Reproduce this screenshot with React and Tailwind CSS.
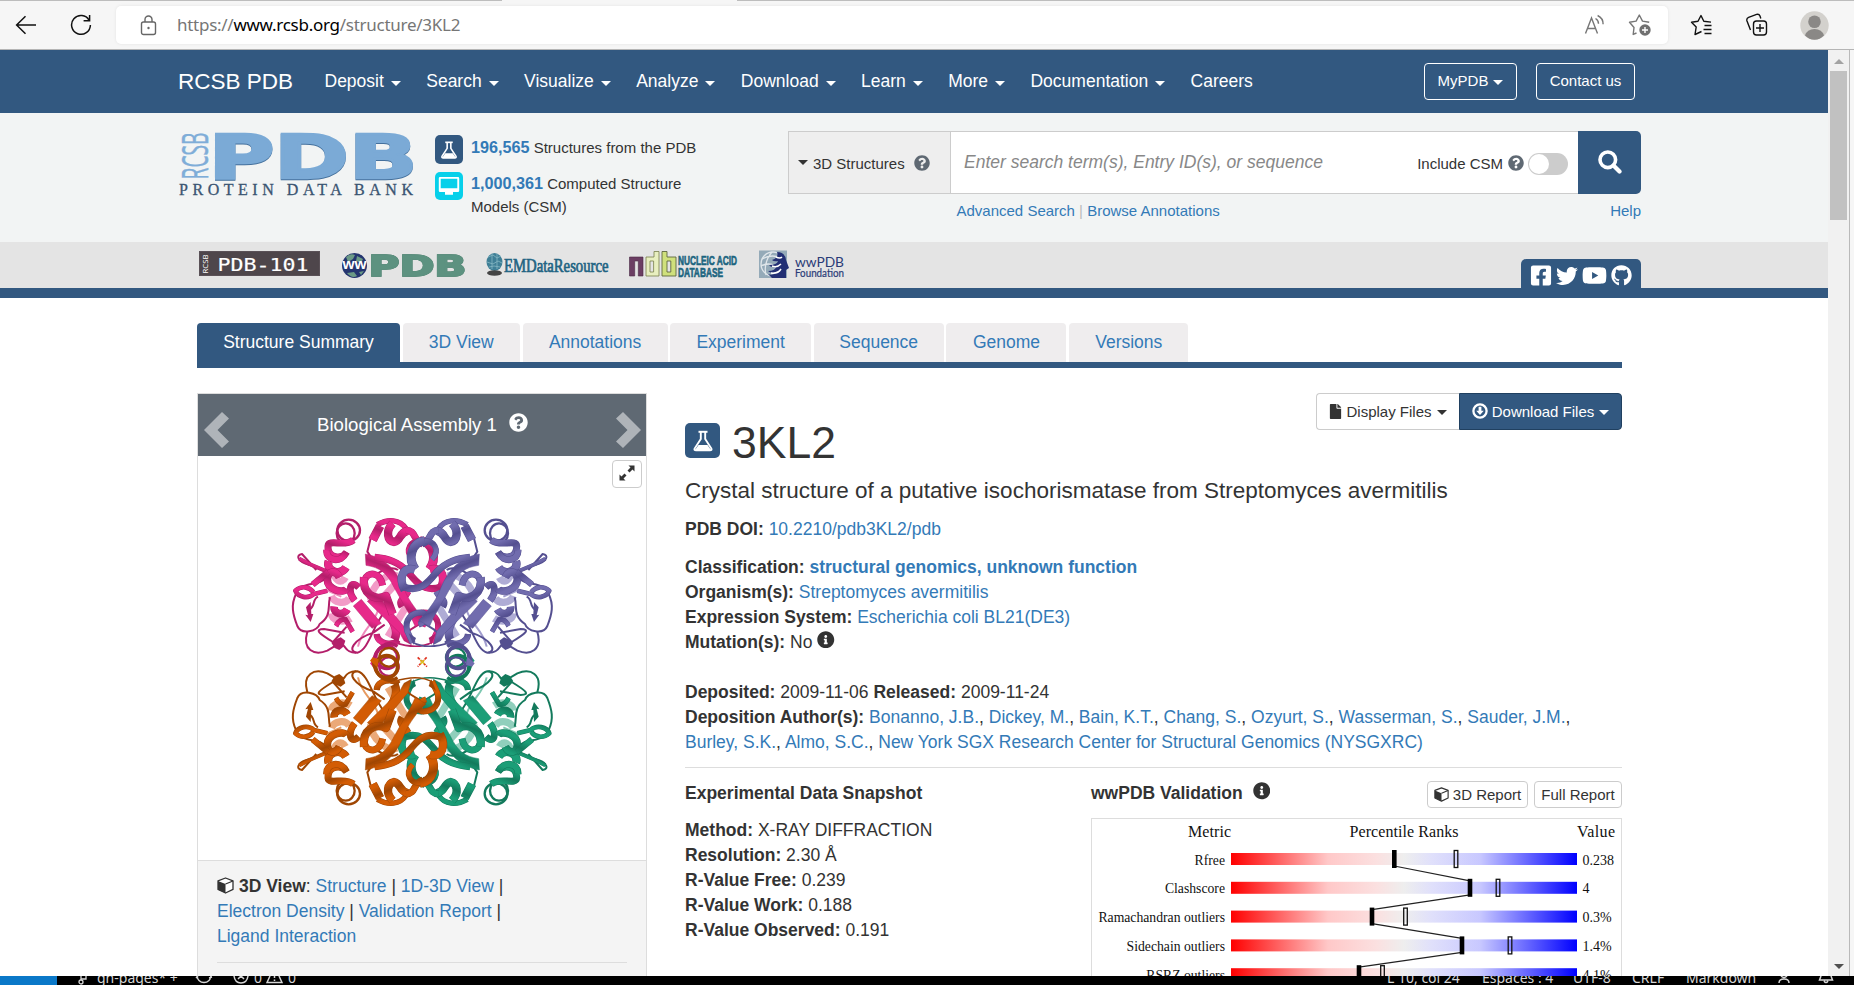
import React from "react";
import { FaFacebookSquare, FaTwitter, FaYoutube, FaGithub, FaQuestionCircle, FaInfoCircle, FaFile } from "react-icons/fa";

const Caret = ({ className = "" }) => (
  <span className={"inline-block h-0 w-0 border-x-[5px] border-t-[5px] border-x-transparent border-t-current " + className} />
);

const A = ({ children, className = "" }) => <a className={"text-[#337ab7] " + className}>{children}</a>;

const Flask = ({ className }) => (
  <svg viewBox="0 0 24 24" className={className} fill="none" stroke="#fff">
    <path d="M7.5 2.8h9" strokeWidth="2" />
    <path d="M9.8 3v7L3.6 19.6Q2.9 21.4 5 21.4h14q2.1 0 1.4-1.8L14.2 10V3" strokeWidth="1.9" />
    <path d="M7.500 16h9l3.500 5h-16z" fill="#fff" stroke="none" />
  </svg>
);

const Cube = ({ className }) => (
  <svg viewBox="0 0 17 17" className={className}>
    <path d="M8.5 1 16 3.8v8.6L8.5 16 1 12.4V3.8z" fill="#fff" stroke="#333" strokeWidth="1.3" strokeLinejoin="round" />
    <path d="M1 4l7.5 3V16L1 12.4z" fill="#333" />
    <path d="M8.5 7 16 4" stroke="#333" strokeWidth="1.2" />
  </svg>
);

/* ---------- browser chrome ---------- */
function Toolbar() {
  return (
    <div className="flex h-[50px] shrink-0 flex-col border-b border-[#b5b5b5] bg-[#f6f6f6]">
      <div className="flex h-[1px] shrink-0">
        <div className="w-[502px] bg-[#bdbdbd]" />
        <div className="w-[235px]" />
        <div className="grow bg-[#bdbdbd]" />
      </div>
      <div className="flex h-[48px] items-center">
        <svg className="ml-[15px] h-[22px] w-[22px]" viewBox="0 0 22 22" fill="none" stroke="#111" strokeWidth="1.5">
          <path d="M21 11H2M10.5 2.2 1.6 11l8.9 8.8" />
        </svg>
        <svg className="ml-[33px] h-[22px] w-[22px]" viewBox="0 0 22 22" fill="none" stroke="#111" strokeWidth="1.5">
          <path d="M19.2 6.3A9.4 9.4 0 1 0 20.4 11" />
          <path d="M19.6 1v5.8h-6" />
        </svg>
        <div className="ml-[24px] flex h-[38px] w-[1552px] items-center rounded-[5px] bg-white shadow-[0_0_3px_#e2e2e2]">
          <svg className="ml-[24px] h-[21px] w-[17px]" viewBox="0 0 17 21" fill="none" stroke="#666" strokeWidth="1.4">
            <rect x="1.5" y="7" width="14" height="12.5" rx="2" />
            <path d="M5 7V4.500a3.500 3.500 0 0 1 7 0V7" />
            <circle cx="8.500" cy="13" r="1.200" fill="#666" stroke="none" />
          </svg>
          <div className="ml-[20px] w-[300px] whitespace-nowrap font-['Noto_Sans',sans-serif] text-[17px] tracking-[-0.27px] text-[#767676]">
            https://<span className="text-black">www.rcsb.org</span>/structure/3KL2
          </div>
          <div className="grow" />
          <svg className="h-[22px] w-[21px]" viewBox="0 0 21 22" fill="none" stroke="#767676" strokeWidth="1.4">
            <path d="M1.500 19.500 7.500 4l6 15.500M3.800 14.500h7.500" />
            <path d="M11.500 4.500a6 6 0 0 1 3 5.300M13.600 1.500a9.500 9.500 0 0 1 5.500 8.800" />
          </svg>
          <svg className="ml-[23px] mr-[16px] h-[24px] w-[24px]" viewBox="0 0 24 24" fill="none" stroke="#767676" strokeWidth="1.4">
            <path d="M8.5 20 5.2 21.4 6 14.5 1.5 9.3l6.6-1.2L11.3 2l3.2 6.1 6.7 1.2" strokeLinejoin="round" />
            <circle cx="17" cy="17" r="5.7" fill="#707070" stroke="none" />
            <path d="M17 14v6M14 17h6" stroke="#fff" />
          </svg>
        </div>
        <svg className="ml-[22px] h-[22px] w-[23px]" viewBox="0 0 23 22" fill="none" stroke="#111" strokeWidth="1.4">
          <path d="M11.500 17.500 5 20.500l1.200-7.500L1.500 8.300 8 7.300 11 1.500l2.800 5.800 7.200.8" strokeLinejoin="round" />
          <path d="M14.500 11.500h7M13.500 15.500h8M14.500 19.500h7" />
        </svg>
        <svg className="ml-[32px] h-[24px] w-[23px]" viewBox="0 0 23 24" fill="none" stroke="#111" strokeWidth="1.4">
          <rect x="8.5" y="8" width="13" height="14" rx="3" />
          <path d="M15 11v8M11 15h8" />
          <path d="M5.5 17 2 8q-.8-2.6 1.6-3.6l8-3q2.4-.7 3.4 1.6l.8 2.5" />
        </svg>
        <svg className="ml-[32px] h-[29px] w-[29px]" viewBox="0 0 29 29">
          <circle cx="14.500" cy="14.500" r="14.200" fill="#d3d1cd" />
          <circle cx="14.500" cy="10.800" r="6.300" fill="#8a8886" />
          <path d="M5 24.500q2-6.500 9.500-6.500t9.500 6.500q-4 4.200-9.500 4.200T5 24.500z" fill="#8a8886" />
        </svg>
      </div>
    </div>
  );
}

/* ---------- navigation ---------- */
const NAV = ["Deposit", "Search", "Visualize", "Analyze", "Download", "Learn", "More", "Documentation"];

function NavBar() {
  return (
    <nav className="flex h-[63px] shrink-0 items-center bg-[#325880] pl-[178px] text-white">
      <span className="w-[146.5px] whitespace-nowrap text-[22.5px]">RCSB PDB</span>
      {NAV.map((n) => (
        <span key={n} className="mr-[25.4px] flex items-center whitespace-nowrap text-[17.5px]">
          {n}
          <Caret className="ml-[7px] mt-[4px]" />
        </span>
      ))}
      <span className="text-[17.5px]">Careers</span>
      <span className="grow" />
      <span className="mr-[19px] flex h-[37px] w-[93px] items-center justify-center rounded-[4px] border border-white text-[15px]">
        MyPDB
        <Caret className="ml-[5px] mt-[2px]" />
      </span>
      <span className="mr-[193px] flex h-[37px] w-[99px] items-center justify-center rounded-[4px] border border-white text-[15px]">Contact us</span>
    </nav>
  );
}

/* ---------- header ---------- */
function PdbLogo() {
  return (
    <svg width="240" height="70" viewBox="176 130 240 70" className="shrink-0 overflow-visible">
      <text transform="translate(207.5 179.5) rotate(-90)" textLength="47" lengthAdjust="spacingAndGlyphs" fontFamily="'Open Sans',sans-serif" fontSize="36.500" fill="#7fadd8" stroke="#7fadd8" strokeWidth=".5">RCSB</text>
      <text x="208.500" y="178.300" textLength="209" lengthAdjust="spacingAndGlyphs" fontFamily="'DejaVu Sans',sans-serif" fontWeight="bold" fontSize="61" fill="#7baad6" stroke="#7baad6" strokeWidth="2.400" className="drop-shadow-[0.8px_1px_0px_#44709c]">PDB</text>
      <text x="179" y="195" textLength="234" lengthAdjust="spacing" fontFamily="'Liberation Serif',serif" fontSize="16" fill="#3b5572" stroke="#3b5572" strokeWidth=".3">PROTEIN DATA BANK</text>
    </svg>
  );
}

function Header() {
  return (
    <header className="flex h-[129px] shrink-0 bg-[#f2f4f4] pl-[176px] text-[15px] text-[#333]">
      <div className="pt-[17px]"><PdbLogo /></div>
      <div className="ml-[19px] flex w-[353px] flex-col pt-[22px]">
        <div className="flex h-[37px]">
          <span className="flex h-[29px] w-[28px] items-center justify-center rounded-[5px] bg-[#325880]">
            <Flask className="h-[20px] w-[20px]" />
          </span>
          <span className="ml-[8px] leading-[24px]"><b className="text-[16.2px] text-[#337ab7]">196,565</b> Structures from the PDB</span>
        </div>
        <div className="flex">
          <span className="flex h-[28px] w-[28px] items-center justify-center rounded-[5px] bg-[#07d0ea]">
            <svg viewBox="0 0 22 20" className="h-[20px] w-[22px]">
              <path fillRule="evenodd" fill="#fff" d="M2 1h18q1.200 0 1.200 1.200v12.600q0 1.200-1.200 1.200h-5v2.800H7V16H2Q.8 16 .8 14.800V2.200Q.8 1 2 1zM2.700 2.700v9.600h16.600V2.700z" />
            </svg>
          </span>
          <span className="ml-[8px] w-[240px] leading-[22.5px]"><b className="text-[16.2px] text-[#337ab7]">1,000,361</b> Computed Structure Models (CSM)</span>
        </div>
      </div>
      <div className="w-[853px] pt-[18px]">
        <div className="flex h-[63px]">
          <div className="flex w-[163px] items-center border border-[#ccc] bg-[#eee] pl-[9px] pt-[1px]">
            <Caret className="mr-[5px] -mt-[1px]" />
            <span className="pt-[2px]">3D Structures</span>
            <FaQuestionCircle className="ml-[9px] h-[16px] w-[16px] text-[#5f6973]" />
          </div>
          <div className="flex grow items-center border-y border-[#ccc] bg-white">
            <span className="ml-[13px] -mt-[1px] whitespace-nowrap text-[17.5px] italic text-[#888]">Enter search term(s), Entry ID(s), or sequence</span>
            <span className="grow" />
            <span className="whitespace-nowrap pt-[4px]">Include CSM</span>
            <FaQuestionCircle className="ml-[5px] mt-[1px] h-[16px] w-[16px] text-[#5f6973]" />
            <span className="ml-[4px] mr-[10px] mt-[2px] flex h-[22px] w-[40px] items-center rounded-full bg-[#ccc] pl-[1px]">
              <span className="h-[20px] w-[20px] rounded-full bg-white" />
            </span>
          </div>
          <div className="flex w-[63px] items-center justify-center rounded-r-[5px] bg-[#325880]">
            <svg viewBox="0 0 24 24" className="-mt-[1px] h-[24px] w-[24px]" fill="none" stroke="#fff">
              <circle cx="9.800" cy="9.800" r="7.800" strokeWidth="3.600" />
              <path d="M15.500 15.500l6 6" strokeWidth="4.200" strokeLinecap="round" />
            </svg>
          </div>
        </div>
        <div className="flex justify-between pl-[168.5px] pt-[6px] leading-[22px]">
          <span className="text-[#bbb]"><A>Advanced Search</A> | <A>Browse Annotations</A></span>
          <A>Help</A>
        </div>
      </div>
    </header>
  );
}

/* ---------- partner strip ---------- */
function PartnerLogos() {
  return (
    <svg width="660" height="40" viewBox="195 245 660 40" className="overflow-visible">
      <rect x="199" y="251" width="121" height="25" fill="#5a5157" />
      <rect x="200" y="252" width="119" height="23" fill="#4e464b" />
      <text transform="translate(208 273.500) rotate(-90)" textLength="19" lengthAdjust="spacingAndGlyphs" fontFamily="'Open Sans',sans-serif" fontSize="7.500" fill="#fff">RCSB</text>
      <text x="217.500" y="270.500" textLength="91" lengthAdjust="spacingAndGlyphs" fontFamily="'DejaVu Sans Mono',monospace" fontSize="17.500" fill="#fff" stroke="#fff" strokeWidth=".15">PDB-101</text>

      <circle cx="354.500" cy="265.500" r="12.500" fill="#24356f" />
      <path d="M346 257q4-4 9-2l-2 4-5 3zM357 256l6 3-2 4-5-2zM347 273l7-1 3 4q-5 3-10-3zM359 272l5-1-3 4z" fill="#6b9a86" />
      <text x="342.500" y="269" textLength="24" lengthAdjust="spacingAndGlyphs" fontFamily="'Liberation Sans',sans-serif" fontWeight="bold" fontSize="14" fill="#fff">ww</text>
      <text x="368.500" y="276" textLength="98" lengthAdjust="spacingAndGlyphs" fontFamily="'DejaVu Sans',sans-serif" fontWeight="bold" fontSize="28" fill="#5d9280" stroke="#5d9280" strokeWidth="1.600" className="drop-shadow-[0.5px_0.7px_0px_#3b6a58]">PDB</text>

      <ellipse cx="494.500" cy="262" rx="8" ry="9" fill="#3f7f96" />
      <path d="M488 257l5-2 4 3 4-2M487 262l6 2 5-3 4 2M489 267l5-1 6 1M492 254v15M497 254v15" stroke="#86b7c4" strokeWidth=".8" fill="none" />
      <ellipse cx="494.500" cy="273" rx="7.500" ry="2.800" fill="#444" />
      <text x="504" y="271.500" textLength="104.500" lengthAdjust="spacingAndGlyphs" fontFamily="'Liberation Serif',serif" fontSize="18.500" fill="#1f6483" stroke="#1f6483" strokeWidth=".7">EMDataResource</text>

      <g fontFamily="'Liberation Sans',sans-serif" fontWeight="bold">
        <path d="M629.500 276v-19h13.500v19h-4.700v-15h-3.600v15z" fill="#6b3e63" stroke="#4a2a45" strokeWidth=".6" />
        <path d="M646 276v-19h8v-5.500h5V276z M650 261v11h3.600v-11z" fill="#e8efc0" fillRule="evenodd" stroke="#777f4a" strokeWidth=".8" />
        <path d="M662 251.500h5v5.500h9v19h-14z M667 261v11h3.800v-11z" fill="#cfe07c" fillRule="evenodd" stroke="#5d6740" strokeWidth=".9" />
        <text x="678" y="265" textLength="59" lengthAdjust="spacingAndGlyphs" fontSize="12.500" fill="#1c6580" stroke="#1c6580" strokeWidth=".6">NUCLEIC ACID</text>
        <text x="678" y="276.500" textLength="45" lengthAdjust="spacingAndGlyphs" fontSize="12.500" fill="#1c6580" stroke="#1c6580" strokeWidth=".6">DATABASE</text>
      </g>

      <rect x="759" y="250.500" width="28" height="27.500" fill="#94aab8" />
      <g fill="none" stroke="#dfe6ea" strokeWidth="1.300">
        <circle cx="773" cy="264" r="12" />
        <path d="M762 259q10-6 22 0M761 266q8-4 14 0M766 275q-3-12 6-23" />
      </g>
      <path d="M777 252q8 0 9 8l3 8-3 2v8h-14l-4-4q6 2 8-2-5 2-8-1 7 0 8-4-5 1-7-2 8 0 9-4-4 1-6-1 7-2 5-8z" fill="#222f74" />
      <path d="M776 257q4 2 6 0M772 266q5 2 9-2M771 273q7 1 10-4" stroke="#fff" strokeWidth="1.500" fill="none" />
      <g fontFamily="'Lato',sans-serif" fill="#2a3c78">
        <text x="795" y="266.500" textLength="49" lengthAdjust="spacingAndGlyphs" fontSize="13.500">wwPDB</text>
        <text x="795" y="277" textLength="49" lengthAdjust="spacingAndGlyphs" fontSize="10.500" stroke="#2a3c78" strokeWidth=".2">Foundation</text>
      </g>
    </svg>
  );
}

function PartnerStrip() {
  return (
    <div className="flex h-[56px] shrink-0 justify-between border-b-[10px] border-[#325880] bg-[#e4e4e4] pl-[195px] pr-[187px]">
      <div className="pt-[3px]"><PartnerLogos /></div>
      <div className="mt-[17px] flex h-[29px] w-[120px] items-center gap-[4px] rounded-t-[5px] bg-[#325880] pl-[9px] pt-[4px] text-white">
        <FaFacebookSquare className="h-[23px] w-[22px]" />
        <FaTwitter className="h-[22px] w-[22px]" />
        <FaYoutube className="h-[25px] w-[25px]" />
        <FaGithub className="h-[21px] w-[21px]" />
      </div>
    </div>
  );
}

/* ---------- molecule ---------- */
function Chain({ id, main, dark, light, transform }) {
  const g = `url(#${id})`;
  const R = ({ d, w = 24 }) => (
    <>
      <path d={d} stroke={dark} strokeWidth={w + 1} />
      <path d={d} stroke={g} strokeWidth={w - 2} />
    </>
  );
  return (
    <g transform={transform} fill="none" strokeLinejoin="round">
      <defs>
        <linearGradient id={id} gradientUnits="userSpaceOnUse" x1="0" y1="0" x2="18" y2="44" spreadMethod="reflect">
          <stop offset="0" stopColor={main} />
          <stop offset=".5" stopColor={main} />
          <stop offset="1" stopColor={dark} />
        </linearGradient>
      </defs>
      <g stroke={light} strokeWidth="22">
        <path d="M534 258C560 244 610 285 612 330M600 350L536 280M688 262C700 285 722 270 724 240M676 325C690 345 722 338 730 318M672 385C695 400 728 392 730 370M560 440L500 340" opacity=".85" />
        <path d="M590 360C600 400 640 420 650 470M745 300L700 320" strokeWidth="6" />
      </g>
      <g stroke={dark} strokeWidth="6">
        <path d="M836 312C852 345 846 372 832 408C820 436 772 424 765 402C728 378 742 350 734 322" />
        <path d="M802 425C818 480 782 498 742 482L702 458" />
        <path d="M690 428L752 417C782 418 768 430 725 456L684 410" />
        <path d="M570 365C608 412 618 480 652 488C684 486 664 448 604 428L570 404" />
        <path d="M655 488C690 490 690 460 700 462" />
        <path d="M775 240L818 192C838 194 832 216 796 224" />
        <path d="M612 145L622 185L612 200" />
        <path d="M505 430C480 402 450 408 460 380" />
        <path d="M530 240C550 225 590 245 600 260" />
        <path d="M745 262C770 290 790 270 836 300M770 320C790 330 775 350 800 362" />
        <path d="M425 455C450 470 490 474 540 458" strokeWidth="5" />
      </g>
      <R d="M428 458L412 424C402 390 424 366 458 368C476 374 466 398 446 404" w={17} />
      <R d="M530 450C546 470 592 462 594 432" w={18} />
      <R d="M540 448C528 420 544 396 560 372" w={24} />
      <path d="M640 328L664 348L608 415L580 400Z" fill={g} stroke={dark} strokeWidth="1.500" />
      <R d="M648 292C672 268 684 300 660 332" w={20} />
      <R d="M500 304C512 328 530 330 518 350" w={20} />
      <path d="M594 312L622 334L524 430L512 452L490 464L500 424Z" fill={g} stroke={dark} strokeWidth="1.500" />
      <path d="M628 192L626 226C584 232 562 250 542 292L490 384L478 410L446 390L464 374C486 344 498 330 510 300C530 250 560 205 628 192Z" fill={g} stroke={dark} strokeWidth="1.500" />
      <R d="M576 286C584 244 622 244 630 270" w={20} />
      <R d="M632 262C638 312 600 334 566 318L546 372" w={24} />
      <R d="M606 150L584 108" w={26} />
      <R d="M592 104C560 86 524 88 506 116" w={15} />
      <R d="M546 100C568 122 562 152 542 156C520 152 528 128 500 122" w={24} />
      <R d="M506 120C474 122 488 150 456 162" w={20} />
      <R d="M486 208C512 180 492 148 458 154" w={16} />
      <R d="M464 152C424 158 412 206 436 238" w={26} />
      <R d="M434 238C398 230 384 262 404 300" w={24} />
      <R d="M400 290C450 310 476 276 500 246C530 214 560 206 600 202" w={20} />
      <g stroke={dark} strokeWidth="7">
        <ellipse cx="678" cy="121" rx="34" ry="32" />
        <ellipse cx="687" cy="130" rx="27" ry="30" />
      </g>
      <R d="M664 150C690 172 738 146 740 168C742 206 698 210 684 186" w={20} />
      <R d="M686 188C700 220 746 214 744 180" w={20} />
      <R d="M686 232C704 262 748 240 738 214" w={24} />
      <R d="M684 296C694 312 742 300 742 268C740 240 716 240 706 262" w={22} />
      <R d="M682 358C694 380 724 372 722 350" w={22} />
      <R d="M666 425L688 388C708 386 712 402 716 408" w={14} />
      <R d="M744 244L796 222L826 206" w={11} />
      <R d="M740 246L786 284" w={18} />
      <R d="M742 302L782 312C800 328 830 322 838 302C820 286 796 290 784 306" w={13} />
      <path d="M792 336L806 352L800 376L808 374L792 396L784 372L790 372Z" fill={dark} />
      <path d="M688 452L702 442L716 448L730 458L720 474L706 480L694 470Z" fill={dark} />
      <path d="M416 430L438 444L430 464Z" fill={dark} />
      <g stroke={dark}>
        <ellipse cx="564" cy="502" rx="33" ry="33" strokeWidth="11" />
        <ellipse cx="557" cy="530" rx="29" ry="28" strokeWidth="7" />
        <path d="M532 470C560 446 600 470 606 524" strokeWidth="9" />
      </g>
      <path d="M592 500L614 520L606 530L588 524Z" fill={main} />
    </g>
  );
}

function Molecule() {
  return (
    <svg width="310" height="340" viewBox="0 0 930 1020">
      <Chain id="cm" main="#e7298a" dark="#b31e6a" light="#f08abd" transform="translate(914 0) scale(-1 1)" />
      <Chain id="cg" main="#1b9e77" dark="#137a5c" light="#7cc7b0" transform="translate(0 1032) scale(1 -1)" />
      <Chain id="cp" main="#716cae" dark="#544f90" light="#a19dce" />
      <Chain id="co" main="#d35c04" dark="#9f4603" light="#e79a60" transform="translate(914 1032) scale(-1 -1)" />
      <g strokeWidth="5" fill="none">
        <path d="M443 502L457 516L471 530M470 502L443 530" stroke="#e0301e" strokeDasharray="9 3" />
        <path d="M451 510L463 522M463 510L451 522" stroke="#d8c41e" strokeWidth="4" />
      </g>
    </svg>
  );
}

function AssemblyCard() {
  return (
    <div className="flex h-[583px] w-[450px] shrink-0 flex-col border border-b-0 border-[#ddd]">
      <div className="flex h-[62px] shrink-0 items-center justify-between bg-[#5f6973] pl-[6px] pr-[5px] text-white">
        <svg width="25" height="36" viewBox="0 0 25 36" className="mt-[10px]"><path d="M18 0l7 6.500L13.500 18 25 29.500 18 36 0 18z" fill="#afb4b9" /></svg>
        <span className="flex items-center text-[18.6px] leading-[24px]">
          Biological Assembly 1
          <FaQuestionCircle className="-mt-[5px] ml-[12px] h-[19px] w-[19px]" />
        </span>
        <svg width="25" height="36" viewBox="0 0 25 36" className="mt-[10px]"><path d="M7 0L0 6.500 11.500 18 0 29.500 7 36 25 18z" fill="#afb4b9" /></svg>
      </div>
      <div className="flex h-[405px] shrink-0 flex-col border-b border-[#ddd]">
        <div className="flex h-[34px] justify-end pr-[4px] pt-[4px]">
          <span className="flex h-[28px] w-[30px] items-center justify-center rounded-[4px] border border-[#ccc]">
            <svg viewBox="0 0 16 16" className="-mt-[3px] h-[16px] w-[16px]" fill="#333">
              <path d="M9.500 0.500h6V6.500l-2-2-3 3-2-2 3-3zM6.500 15.500H.5V9.500l2 2 3-3L7.500 10.500l-3 3z" />
            </svg>
          </span>
        </div>
        <div className="pl-[72px]"><Molecule /></div>
      </div>
      <div className="grow bg-[#f4f4f4] px-[19px] pt-[13px] text-[17.5px] leading-[25px] text-[#333]">
        <div className="whitespace-nowrap">
          <Cube className="mr-[5px] inline-block h-[17px] w-[17px] align-[-2px]" />
          <b>3D View</b>: <A>Structure</A> | <A>1D-3D View</A> |
        </div>
        <div><A>Electron Density</A> | <A>Validation Report</A> |</div>
        <div><A>Ligand Interaction</A></div>
        <div className="mt-[13px] border-t border-[#ddd]" />
      </div>
    </div>
  );
}

/* ---------- validation chart ---------- */
const ROWS = [
  ["Rfree", "0.238", 303.3, 365],
  ["Clashscore", "4", 379, 407],
  ["Ramachandran outliers", "0.3%", 281, 314.5],
  ["Sidechain outliers", "1.4%", 371, 419],
  ["RSRZ outliers", "4.1%", 268, 291.5],
];

function ValidationChart() {
  return (
    <svg width="529" height="158" viewBox="1 1 529 158" fontFamily="'Liberation Serif',serif" fill="#111">
      <defs>
        <linearGradient id="rank">
          <stop offset="0" stopColor="#f00" />
          <stop offset=".28" stopColor="#ffc8c8" />
          <stop offset=".42" stopColor="#fbe0e0" />
          <stop offset=".5" stopColor="#eee" />
          <stop offset=".58" stopColor="#e0e0fb" />
          <stop offset=".72" stopColor="#c8c8ff" />
          <stop offset="1" stopColor="#00f" />
        </linearGradient>
      </defs>
      <text x="97" y="19" textLength="43" fontSize="16">Metric</text>
      <text x="258.500" y="19" textLength="109" fontSize="16">Percentile Ranks</text>
      <text x="486" y="19" textLength="38" fontSize="16">Value</text>
      {ROWS.map(([name, value, a, b], i) => {
        const y = 41 + i * 28.8;
        const next = ROWS[i + 1];
        return (
          <g key={name}>
            <text x="134" y={y + 5.5} textAnchor="end" fontSize="13.700">{name}</text>
            <rect x="140" y={y - 6} width="346" height="12" fill="url(#rank)" />
            <text x="491.500" y={y + 5.5} fontSize="14">{value}</text>
            {next && <path d={`M${a} ${y + 7}L${next[2]} ${y + 21.8}`} stroke="#222" strokeWidth="1.2" />}
            <rect x={a - 2.3} y={y - 9} width="4.600" height="18" fill="#000" />
            <rect x={b - 1.8} y={y - 8.5} width="3.600" height="17" fill="none" stroke="#111" strokeWidth="1.300" />
          </g>
        );
      })}
    </svg>
  );
}

/* ---------- right column ---------- */
const AUTHORS = ["Bonanno, J.B.", "Dickey, M.", "Bain, K.T.", "Chang, S.", "Ozyurt, S.", "Wasserman, S.", "Sauder, J.M."];
const AUTHORS2 = ["Burley, S.K.", "Almo, S.C."];

function Details() {
  return (
    <div className="flex w-[937px] flex-col text-[17.5px] leading-[25px] text-[#333]">
      <div className="flex h-[65px] justify-between">
        <div className="flex items-end">
          <span className="flex h-[35px] w-[35px] items-center justify-center rounded-[5px] bg-[#325880]">
            <Flask className="h-[24px] w-[24px]" />
          </span>
          <span className="ml-[12px] text-[44.5px] leading-[31px]">3KL2</span>
        </div>
        <div className="flex h-[37px] text-[15px] leading-[22px]">
          <span className="flex w-[143px] items-center justify-center rounded-l-[4px] border border-r-0 border-[#ccc]">
            <FaFile className="mr-[4px] h-[15px] w-[13px]" />
            Display Files
            <Caret className="ml-[5px] mt-[2px]" />
          </span>
          <span className="flex w-[163px] items-center justify-center rounded-r-[4px] border border-[#204060] bg-[#325880] text-white">
            <svg viewBox="0 0 16 16" className="-mt-[2px] mr-[4px] h-[16px] w-[16px]">
              <circle cx="8" cy="8" r="6.600" fill="none" stroke="#fff" strokeWidth="2.300" />
              <path d="M6.600 3.800h2.800v4h2.400L8 12 4.200 7.800h2.400z" fill="#fff" />
            </svg>
            Download Files
            <Caret className="ml-[5px] mt-[2px]" />
          </span>
        </div>
      </div>
      <div className="mt-[20px] text-[22.5px] leading-[26px]">Crystal structure of a putative isochorismatase from Streptomyces avermitilis</div>
      <div className="mt-[13px]"><b>PDB DOI:</b> <A>10.2210/pdb3KL2/pdb</A></div>
      <div className="mt-[13px]"><b>Classification:</b> <A className="font-bold">structural genomics, unknown function</A></div>
      <div><b>Organism(s):</b> <A>Streptomyces avermitilis</A></div>
      <div><b>Expression System:</b> <A>Escherichia coli BL21(DE3)</A></div>
      <div><b>Mutation(s):</b> No <FaInfoCircle className="inline-block h-[17.5px] w-[17.5px] align-[0px]" /></div>
      <div className="mt-[25px]"><b>Deposited:</b> 2009-11-06 <b>Released:</b> 2009-11-24</div>
      <div className="whitespace-nowrap"><b>Deposition Author(s):</b> {AUTHORS.map((a) => <React.Fragment key={a}><A>{a}</A>, </React.Fragment>)}</div>
      <div className="whitespace-nowrap">{AUTHORS2.map((a) => <React.Fragment key={a}><A>{a}</A>, </React.Fragment>)}<A>New York SGX Research Center for Structural Genomics (NYSGXRC)</A></div>
      <div className="mt-[12px] border-t border-[#ddd]" />
      <div className="mt-[13px] flex justify-between">
        <div>
          <b>Experimental Data Snapshot</b>
          <div className="mt-[12px]"><b>Method:</b> X-RAY DIFFRACTION</div>
          <div><b>Resolution:</b> 2.30 Å</div>
          <div><b>R-Value Free:</b> 0.239</div>
          <div><b>R-Value Work:</b> 0.188</div>
          <div><b>R-Value Observed:</b> 0.191</div>
        </div>
        <div className="w-[531px]">
          <div className="flex h-[37px] text-[15px]">
            <b className="text-[17.5px]">wwPDB Validation</b>
            <FaInfoCircle className="ml-[10px] mt-[1px] h-[17.5px] w-[17.5px]" />
            <span className="grow" />
            <span className="mr-[6px] flex h-[27px] w-[101px] items-center justify-center rounded-[4px] border border-[#ccc] leading-[24px]">
              <Cube className="mr-[4px] h-[15px] w-[15px]" />
              3D Report
            </span>
            <span className="flex h-[27px] w-[88px] items-center justify-center rounded-[4px] border border-[#ccc] leading-[24px]">Full Report</span>
          </div>
          <div className="h-[160px] border border-b-0 border-[#ddd]"><ValidationChart /></div>
        </div>
      </div>
    </div>
  );
}

const TABS = [
  ["3D View", "w-[117px]"],
  ["Annotations", "w-[145px]"],
  ["Experiment", "w-[140.5px]"],
  ["Sequence", "w-[130px]"],
  ["Genome", "w-[120px]"],
  ["Versions", "w-[119px]"],
];

function Content() {
  return (
    <main className="grow bg-white pl-[197px] pt-[25px]">
      <div className="flex h-[45px] w-[1425px] gap-[2.8px] border-b-[6px] border-[#325880] text-[17.5px] leading-[38px]">
        <span className="w-[203px] rounded-t-[4px] bg-[#325880] text-center text-white">Structure Summary</span>
        {TABS.map(([t, w]) => (
          <span key={t} className={"rounded-t-[4px] bg-[#efedee] text-center text-[#337ab7] " + w}>{t}</span>
        ))}
      </div>
      <div className="mt-[25px] flex gap-[38px]">
        <AssemblyCard />
        <Details />
      </div>
    </main>
  );
}

function StatusBar() {
  return (
    <div className="flex h-[9px] shrink-0 items-end overflow-hidden bg-black font-['Noto_Sans',sans-serif] text-[14px] text-[#d6d6d6]">
      <div className="h-[9px] w-[57px] bg-[#0a78c8]" />
      <svg width="14" height="9" viewBox="0 0 14 9" className="ml-[20px]" fill="none" stroke="#d6d6d6" strokeWidth="1.300"><circle cx="4" cy="6" r="2" /><path d="M4 4V0M4 3h5V0" /></svg>
      <span className="ml-[6px] w-[98px] whitespace-nowrap leading-[15px]">gh-pages* +</span>
      <svg width="18" height="9" viewBox="0 0 18 9" className="mr-[20px]" fill="none" stroke="#d6d6d6" strokeWidth="1.500"><path d="M2 0q1 6.500 7 6.500T16 0M1 2l2-2M14 2l3-1" /></svg>
      <svg width="16" height="9" viewBox="0 0 16 9" fill="none" stroke="#d6d6d6" strokeWidth="1.500"><path d="M1 0q1 7 7 7t7-7M5 3l3-3 3 3" /></svg>
      <span className="ml-[5px] leading-[15px]">0</span>
      <svg width="17" height="9" viewBox="0 0 17 9" className="ml-[4px]" fill="none" stroke="#d6d6d6" strokeWidth="1.500"><path d="M4 0L1 6.500h15L13 0M8.500 0v2M8.500 3.500v1.500" /></svg>
      <span className="ml-[5px] leading-[15px]">0</span>
      <span className="grow" />
      <span className="w-[95px] whitespace-nowrap leading-[15px]">L 10, col 24</span>
      <span className="w-[91px] whitespace-nowrap leading-[15px]">Espaces : 4</span>
      <span className="w-[59px] whitespace-nowrap leading-[15px]">UTF-8</span>
      <span className="w-[54px] whitespace-nowrap leading-[15px]">CRLF</span>
      <span className="w-[90px] whitespace-nowrap leading-[15px]">Markdown</span>
      <svg width="16" height="9" viewBox="0 0 16 9" fill="none" stroke="#d6d6d6" strokeWidth="1.500"><path d="M5 0q3 3 6 0M3 7q0-4 5-4t5 4" /></svg>
      <svg width="16" height="9" viewBox="0 0 16 9" className="ml-[26px] mr-[20px]" fill="none" stroke="#d6d6d6" strokeWidth="1.500"><path d="M3 0L1.500 4h13L13 0M6 5q2 3 4 0" /></svg>
    </div>
  );
}

function ScrollBar() {
  return (
    <div className="flex w-[26px] shrink-0 bg-[#f6f6f6]">
      <div className="flex w-[22px] flex-col items-center border-r border-[#b9b9b9] bg-[#f1f1f1]">
        <div className="mt-[9px] h-0 w-0 border-x-[5px] border-b-[5px] border-x-transparent border-b-[#a3a3a3]" />
        <div className="mt-[7px] h-[149px] w-[17px] bg-[#c1c1c1]" />
        <div className="grow" />
        <div className="mb-[7px] h-0 w-0 border-x-[5px] border-t-[5px] border-x-transparent border-t-[#505050]" />
      </div>
    </div>
  );
}

export default function App() {
  return (
    <div className="flex h-[985px] w-[1854px] flex-col overflow-hidden bg-white font-['Liberation_Sans',Arial,sans-serif]">
      <Toolbar />
      <div className="flex h-[926px] shrink-0 overflow-hidden">
        <div className="flex w-[1828px] flex-col overflow-hidden">
          <NavBar />
          <Header />
          <PartnerStrip />
          <Content />
        </div>
        <ScrollBar />
      </div>
      <StatusBar />
    </div>
  );
}
